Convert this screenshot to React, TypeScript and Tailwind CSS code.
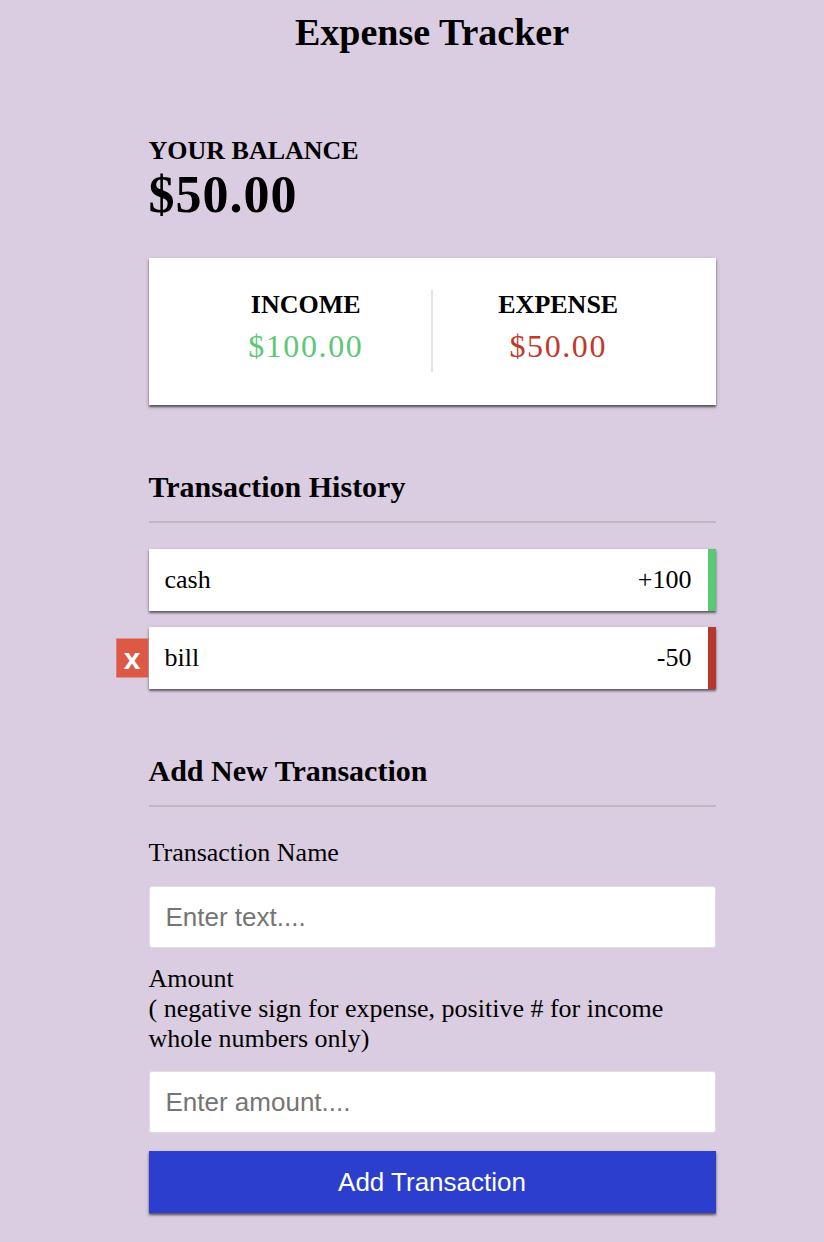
import React from "react";

const serif = "font-['Liberation_Serif','Times_New_Roman',serif]";
const sans = "font-['Liberation_Sans',Arial,sans-serif]";

export default function App() {
  return (
    <div className={`min-h-screen w-full bg-[#dbcde1] pl-[40px] text-black ${serif}`}>
      <div className="mx-auto w-[567px] pt-[10px] pb-[29px]">
        <h2 className="text-center text-[38px] leading-[44px] font-bold">Expense Tracker</h2>

        <h4 className="mt-[82px] text-[26px] leading-[30px] font-bold">YOUR BALANCE</h4>
        <h1 className="text-[52px] leading-[58px] font-bold tracking-[1px]">$50.00</h1>

        <div className="mt-[34px] flex bg-white px-[32px] pt-[32px] pb-[33px] shadow-[0_2px_5px_rgba(0,0,0,0.15),0_2px_2px_rgba(0,0,0,0.55)]">
          <div className="flex-1 border-r-2 border-[#e3e3e3] pb-[8px] text-center">
            <h4 className="text-[26px] leading-[30px] font-bold">INCOME</h4>
            <p className="mt-[8px] text-[32px] leading-[36px] tracking-[1.6px] text-[#5bc877]">$100.00</p>
          </div>
          <div className="flex-1 pb-[8px] text-center">
            <h4 className="text-[26px] leading-[30px] font-bold">EXPENSE</h4>
            <p className="mt-[8px] text-[32px] leading-[36px] tracking-[1.6px] text-[#c0392b]">$50.00</p>
          </div>
        </div>

        <h3 className="mt-[65px] border-b-2 border-[#bdb7c0] pb-[17px] text-[30px] leading-[34px] font-bold">
          Transaction History
        </h3>

        <ul className="mt-[26px] flex flex-col gap-[16px]">
          <li className="relative flex h-[62px] items-center justify-between border-r-[8px] border-[#5bc877] bg-white pl-[16px] pr-[16px] text-[26px] leading-[30px] shadow-[0_1px_4px_rgba(0,0,0,0.15),0_2px_2px_rgba(0,0,0,0.5)]">
            <span>cash</span>
            <span>+100</span>
          </li>
          <li className="relative flex h-[62px] items-center justify-between border-r-[8px] border-[#b8372b] bg-white pl-[16px] pr-[16px] text-[26px] leading-[30px] shadow-[0_1px_4px_rgba(0,0,0,0.15),0_2px_2px_rgba(0,0,0,0.5)]">
            <button
              className={`absolute left-0 top-1/2 -translate-x-full -translate-y-1/2 bg-[#de5846] px-[8px] py-[3px] text-[30px] leading-[33px] font-bold text-white ${sans}`}
            >
              x
            </button>
            <span>bill</span>
            <span>-50</span>
          </li>
        </ul>

        <h3 className="mt-[65px] border-b-2 border-[#bdb7c0] pb-[17px] text-[30px] leading-[34px] font-bold">
          Add New Transaction
        </h3>

        <form onSubmit={(e) => e.preventDefault()}>
          <label className="mt-[31px] block text-[26px] leading-[30px]">Transaction Name</label>
          <input
            type="text"
            placeholder="Enter text...."
            className={`mt-[18px] block h-[62px] w-full rounded-[3px] border border-[#dedede] bg-white px-[16px] text-[26px] placeholder:text-[#757575] ${sans}`}
          />

          <label className="mt-[16px] block text-[26px] leading-[30px]">
            Amount
            <br />( negative sign for expense, positive # for income
            <br />
            whole numbers only)
          </label>
          <input
            type="text"
            placeholder="Enter amount...."
            className={`mt-[17px] block h-[62px] w-full rounded-[3px] border border-[#dedede] bg-white px-[16px] text-[26px] placeholder:text-[#757575] ${sans}`}
          />

          <button
            type="submit"
            className={`mt-[18px] block h-[62px] w-full bg-[#2c3ecd] text-[26px] text-white shadow-[0_2px_4px_rgba(0,0,0,0.2),0_2px_2px_rgba(0,0,0,0.5)] ${sans}`}
          >
            Add Transaction
          </button>
        </form>
      </div>
    </div>
  );
}
